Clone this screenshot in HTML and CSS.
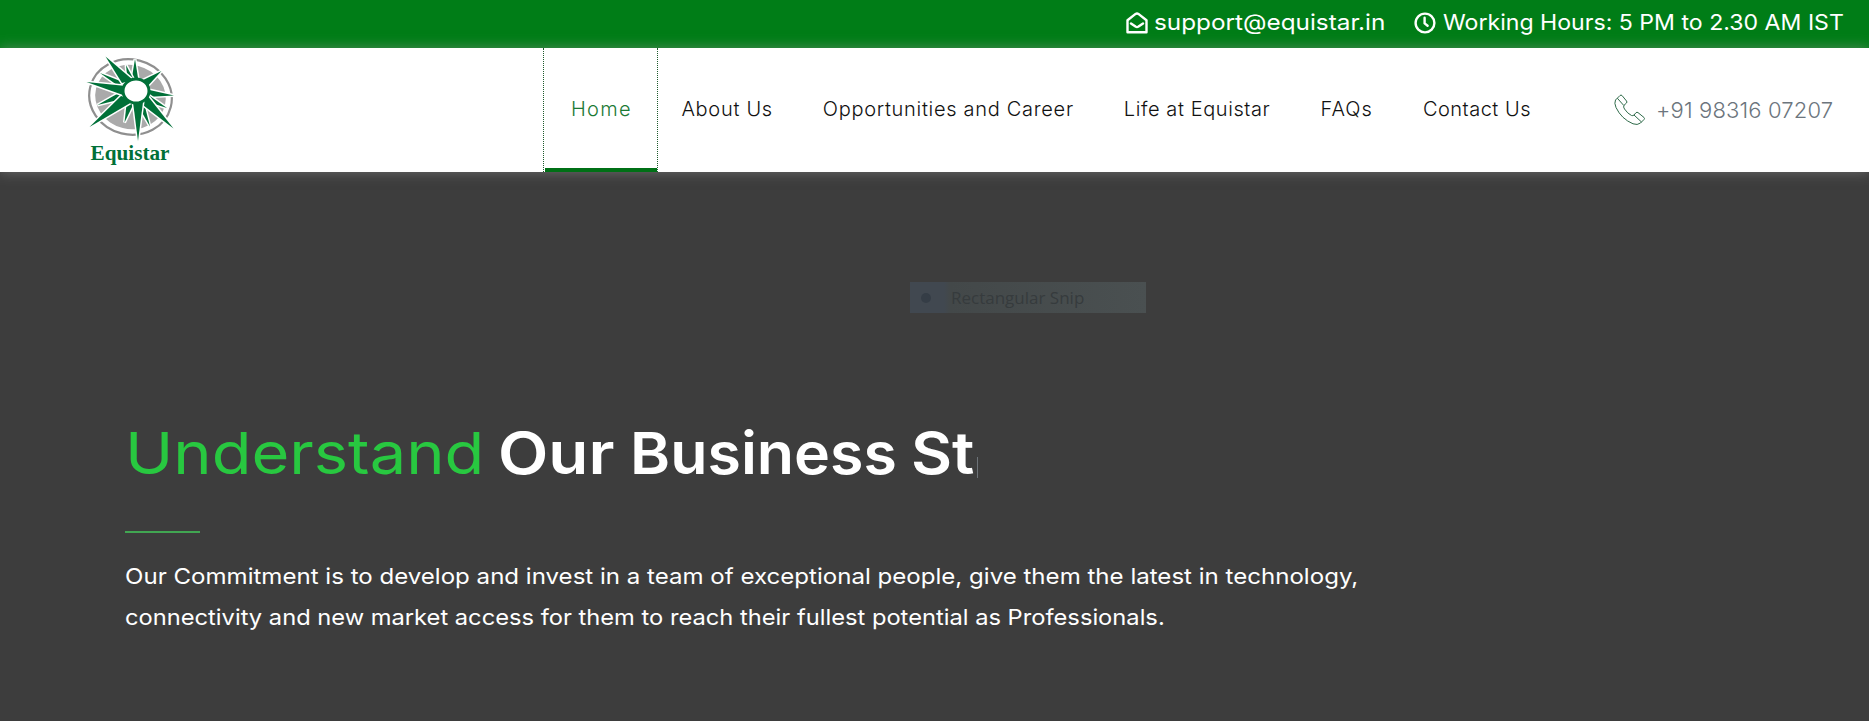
FILE: index.html
```html
<!DOCTYPE html>
<html lang="en">
<head>
    <meta charset="UTF-8">
    <meta name="viewport" content="width=device-width, initial-scale=1.0">
    <title>Equistar</title>
    <link rel="stylesheet" href="styles.css">
</head>
<body>
    <div class="topbar">
        <a class="topbar-item email" href="mailto:support@equistar.in">
            <svg class="icon-mail" viewBox="0 0 22 22">
                <path d="M1.5 8.2 L9.6 1.9 Q11 1 12.4 1.9 L20.5 8.2 V20.3 H1.5 Z M5 11.4 L9.5 14.6 Q11 15.6 12.5 14.6 L17 11.4"/>
            </svg>
            <span>support@equistar.in</span>
        </a>
        <div class="topbar-item hours">
            <svg class="icon-clock" viewBox="0 0 22 22">
                <circle cx="11" cy="11" r="9.4"/>
                <path d="M10.6 5.8 V11.4 L13.6 13.8"/>
            </svg>
            <span>Working Hours: 5 PM to 2.30 AM IST</span>
        </div>
    </div>

    <header class="header">
        <a class="logo" href="#">
            <svg viewBox="0 0 90 112">
                <ellipse class="ring" cx="45.5" cy="42" rx="41.5" ry="37.5" transform="rotate(14 45.5 42)"/>
                <ellipse class="disc" cx="45.5" cy="42" rx="35.5" ry="32" transform="rotate(14 45.5 42)"/>
                <g class="rays">
                    <path d="M50 4 L53.5 26 L46 28 Z"/>
                    <path d="M41 10 L50 27 L43 29 Z"/>
                    <path d="M76.5 16 L60 34 L54 27 Z"/>
                    <path d="M89 40.5 L61 42 L60 34 Z"/>
                    <path d="M82 53 L60 46 L62 39 Z"/>
                    <path d="M65 71.5 L51 47 L58 44 Z"/>
                    <path d="M39.5 67.5 L42 45 L49 48 Z"/>
                    <path d="M12.5 50 L39 35 L41 43 Z"/>
                    <path d="M15 18 L43 29 L39 35 Z"/>
                    <path d="M20.500 1.500 L48 25 L37 28 Z"/>
                    <path d="M88.500 73.500 L54 47 L62 40 Z"/>
                    <path d="M53 86 L48 47 L58 47 Z"/>
                    <path d="M4.500 72 L38 39 L47 47 Z"/>
                    <path d="M1.500 27 L41 31 L38 40 Z"/>
                </g>
                <ellipse class="core" cx="51" cy="36" rx="13" ry="12"/>
                <text x="5.5" y="105" textLength="79" lengthAdjust="spacingAndGlyphs">Equistar</text>
            </svg>
        </a>
        <nav class="nav">
            <a class="active" href="#">Home</a>
            <a href="#">About Us</a>
            <a href="#">Opportunities and Career</a>
            <a href="#">Life at Equistar</a>
            <a href="#">FAQs</a>
            <a href="#">Contact Us</a>
        </nav>
        <a class="phone" href="tel:+919831607207">
            <svg viewBox="0 0 32 32">
                <path d="M1.5 6 L6 1.5 Q7 .6 8 1.5 L12.5 7 Q13.4 8 12.5 9 L10 11.3 Q9 13 10.5 15 Q13.5 19.5 17.5 21.5 Q19 22 20 21 L22 18.7 Q23 17.8 24 18.6 L30 23.5 Q31 24.5 30 25.5 L26.5 29 Q23.5 31.5 19 29.8 Q7.5 25 2 13.5 Q0 9 1.5 6 Z M3.3 4.2 L9.8 11.5 M20 21 L27.5 28"/>
            </svg>
            <span>+91 98316 07207</span>
        </a>
    </header>

    <main class="hero">
        <div class="snip"><i class="snip-dot"></i><span>Rectangular Snip</span></div>
        <h1>
            <span class="green">Understand</span>
            <b class="our">Our</b>
            <b class="business">Business</b>
            <b class="st">St</b>
            <i class="cursor"></i>
        </h1>
        <hr>
        <p>
            <span class="line">Our Commitment is to develop and invest in a team of exceptional people, give them the latest in technology,</span>
            <span class="line">connectivity and new market access for them to reach their fullest potential as Professionals.</span>
        </p>
    </main>
</body>
</html>
```

FILE: styles.css
```css
* {
    box-sizing: border-box;
}
body {
    margin: 0;
    height: 721px;
    overflow: hidden;
    font-family: Inter, "Open Sans", sans-serif;
    background-color: #3d3d3d;
    color: #fff;
}
a {
    color: inherit;
    text-decoration: none;
}

/* Top bar */
.topbar {
    display: flex;
    justify-content: flex-end;
    gap: 29px;
    height: 48px;
    padding-right: 25px;
    background-color: #007d17;
    font-size: 22px;
    line-height: 45px;
}
.topbar-item {
    display: flex;
    align-items: center;
    height: 45px;
    white-space: nowrap;
}
.topbar-item svg {
    width: 22px;
    height: 22px;
    fill: none;
    stroke: #fff;
    stroke-width: 2.4;
    stroke-linejoin: round;
    stroke-linecap: round;
}
.email {
    gap: 6px;
}
.email span {
    width: 231px;
    transform: scaleX(1.105);
    transform-origin: left;
}
.hours {
    gap: 7px;
}
.hours span {
    width: 401px;
    transform: scaleX(1.05);
    transform-origin: left;
}

/* Header */
.header {
    position: relative;
    display: flex;
    height: 124px;
    background-color: #fff;
    box-shadow: 0 0 12px rgba(150, 150, 150, 0.55);
}
.logo {
    width: 90px;
    height: 112px;
    margin: 7px 368px 0 85px;
}
.logo svg {
    display: block;
    width: 90px;
    height: 112px;
}
.ring {
    fill: #fff;
    stroke: #8f8f8f;
    stroke-width: 2.2;
}
.disc {
    fill: #aaa;
}
.rays {
    fill: #007038;
    stroke: #fff;
    stroke-width: 3;
    paint-order: stroke;
}
.core {
    fill: #fff;
    stroke: #007038;
    stroke-width: 3;
}
.logo text {
    font: bold 21px "Liberation Serif", serif;
    fill: #007038;
}

.nav {
    display: flex;
    gap: 50px;
    width: 988px;
    font-size: 20px;
    font-weight: 300;
    color: #111;
    white-space: nowrap;
}
.nav a {
    height: 124px;
    line-height: 123px;
}
.nav .active {
    width: 116px;
    margin-right: -27px;
    padding-left: 27px;
    color: #1b7a35;
    letter-spacing: 1.3px;
    border: 1px dotted #1d5a2c;
    border-width: 0 1px;
    background: linear-gradient(#007016, #007016) center bottom / 112px 4px no-repeat;
}
.nav a:nth-child(2) {
    letter-spacing: 0.7px;
}
.nav a:nth-child(3) {
    letter-spacing: 0.7px;
}
.nav a:nth-child(4) {
    letter-spacing: 0.59px;
}
.nav a:nth-child(5) {
    letter-spacing: 1.05px;
}
.nav a:nth-child(6) {
    letter-spacing: 0.5px;
}

.phone {
    display: flex;
    align-items: center;
    gap: 10px;
    height: 123px;
    margin-left: 83px;
    color: #6c757d;
    font-size: 22px;
    font-weight: 300;
    letter-spacing: 0.15px;
    white-space: nowrap;
}
.phone svg {
    width: 32px;
    height: 32px;
    fill: none;
    stroke: #2f6b4a;
    stroke-width: 1;
}

/* Hero */
.hero {
    display: flex;
    flex-direction: column;
    padding: 110px 125px 0;
}
.snip {
    display: flex;
    align-items: center;
    width: 236px;
    height: 31px;
    margin-left: 785px;
    background: linear-gradient(90deg, #414850 34px, #434849 40px, #4a5051);
    color: #363b3d;
    font: 17px "Open Sans", sans-serif;
}
.snip-dot {
    width: 10px;
    height: 10px;
    margin: 0 20px 0 11px;
    border-radius: 50%;
    background-color: #353d46;
}
h1 {
    display: flex;
    height: 80px;
    margin: 100px 0 0;
    font-size: 58px;
    font-weight: 400;
    line-height: 80px;
    white-space: nowrap;
}
/* the title letters are stretched a little to look wider */
h1 span,
h1 b {
    transform-origin: left;
}
h1 b {
    font-weight: 600;
}
.green {
    width: 373px;
    color: #28c840;
    transform: scaleX(1.12);
}
.our {
    width: 132px;
    transform: scaleX(1.13);
}
.business {
    width: 281px;
    transform: scaleX(1.05);
}
.st {
    width: 66px;
    transform: scaleX(1.09);
}
.cursor {
    width: 1px;
    height: 21px;
    margin-top: 44px;
    background-color: #6d7378;
}
hr {
    width: 75px;
    height: 2px;
    margin: 38px 0 23px;
    border: 0;
    background-color: #41a652;
}
p {
    margin: 0;
    font-size: 22px;
    line-height: 41px;
    white-space: nowrap;
}
.line {
    display: block;
    transform: scaleX(1.094);
    transform-origin: left;
}
.line + .line {
    transform: scaleX(1.077);
}
```
